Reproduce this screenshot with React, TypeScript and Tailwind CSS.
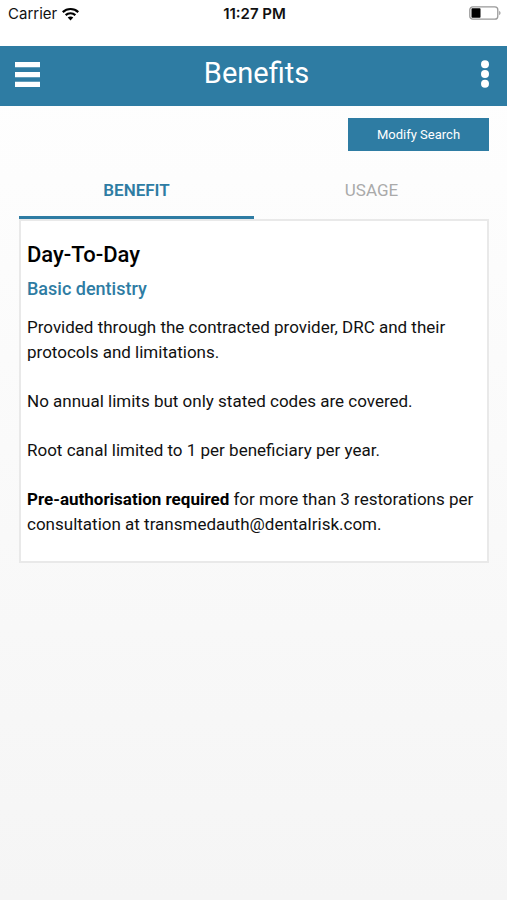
import React from "react";

const StatusBar: React.FC = () => (
  <div className="grid h-[46px] grid-cols-[1fr_auto_1fr] items-start bg-white pt-1 pr-[6px] pl-2 font-['Inter',sans-serif] text-[15px] leading-5 text-[#111]">
    <div className="flex items-center gap-[5px]">
      <span>Carrier</span>
      <svg width="17" height="13" viewBox="0 0 17 13" fill="#000">
        <path d="M8.500 0C5.300 0 2.300 1.200 0 3.300L1.500 4.900A10.200 10.200 0 0 1 15.500 4.900L17 3.300A12.500 12.500 0 0 0 8.500 0Z" />
        <path d="M8.500 4.200C6.400 4.200 4.400 5 2.900 6.300L4.400 7.900A6 6 0 0 1 12.600 7.900L14.100 6.300A8.300 8.300 0 0 0 8.500 4.200Z" />
        <path d="M8.500 8.400C7.400 8.400 6.500 8.800 5.700 9.400L8.500 12.500L11.300 9.400A4.200 4.200 0 0 0 8.500 8.400Z" />
      </svg>
    </div>
    <span className="text-center font-semibold">11:27 PM</span>
    <svg className="mt-[2px] justify-self-end" width="32" height="14" viewBox="0 0 32 14">
      <rect x="0.800" y="0.800" width="28" height="12.400" rx="3" fill="#fff" stroke="#999" strokeWidth="1.300" />
      <rect x="2.500" y="2.300" width="9" height="9.400" rx="0.800" fill="#000" />
      <path d="M30.200 4.800V9.200C32 8.500 32 5.500 30.200 4.800Z" fill="#999" />
    </svg>
  </div>
);

const Header: React.FC = () => (
  <header className="flex h-[60px] items-center justify-between bg-[#2e7ca3] pr-[17px] pb-1 pl-[15px] text-white">
    <button aria-label="Menu" className="w-10">
      <svg width="25" height="25" viewBox="0 0 25 25" fill="currentColor">
        <path d="M0 0h25v5.300H0zM0 9.900h25v5.300H0zM0 19.700h25v5.300H0z" />
      </svg>
    </button>
    <h1 className="pb-[2px] text-[29px] leading-9">Benefits</h1>
    <button aria-label="More" className="flex w-8 justify-end">
      <svg width="10" height="28" viewBox="0 0 10 28" fill="currentColor">
        <circle cx="5" cy="4.200" r="4" />
        <circle cx="5" cy="14" r="4" />
        <circle cx="5" cy="23.800" r="4" />
      </svg>
    </button>
  </header>
);

const App: React.FC = () => (
  <div className="min-h-screen bg-linear-to-b from-white to-[#f5f5f5] font-['Roboto',sans-serif] text-black">
    <StatusBar />
    <Header />
    <main className="pt-3 pr-[18px] pl-[19px]">
      <div className="flex justify-end">
        <button className="h-[33px] w-[141px] bg-[#2e7ca3] text-[13px] text-white">
          Modify Search
        </button>
      </div>
      <div role="tablist" className="mt-[15px] grid h-[53px] grid-cols-2 text-[17px]">
        <button
          role="tab"
          aria-selected="true"
          className="border-b-3 border-[#2e7ca3] font-semibold text-[#2e7ca3]"
        >
          BENEFIT
        </button>
        <button
          role="tab"
          aria-selected="false"
          className="border-b-3 border-transparent text-[#aaa]"
        >
          USAGE
        </button>
      </div>
      <section className="border-2 border-[#e9e9e9] bg-white px-[6px] pt-[18px] pb-6">
        <h2 className="text-[22px] leading-8 font-medium">Day-To-Day</h2>
        <h3 className="mt-1 text-lg leading-7 font-medium text-[#2e7ca3]">
          Basic dentistry
        </h3>
        <div className="mt-3 space-y-6 text-[17px] leading-[25px] text-[#111]">
          <p>
            Provided through the contracted provider, DRC and their protocols and
            limitations.
          </p>
          <p>No annual limits but only stated codes are covered.</p>
          <p>Root canal limited to 1 per beneficiary per year.</p>
          <p>
            <strong className="font-bold text-black">
              Pre-authorisation required
            </strong>{" "}
            for more than 3 restorations per consultation at
            transmedauth@dentalrisk.com.
          </p>
        </div>
      </section>
    </main>
  </div>
);

export default App;
